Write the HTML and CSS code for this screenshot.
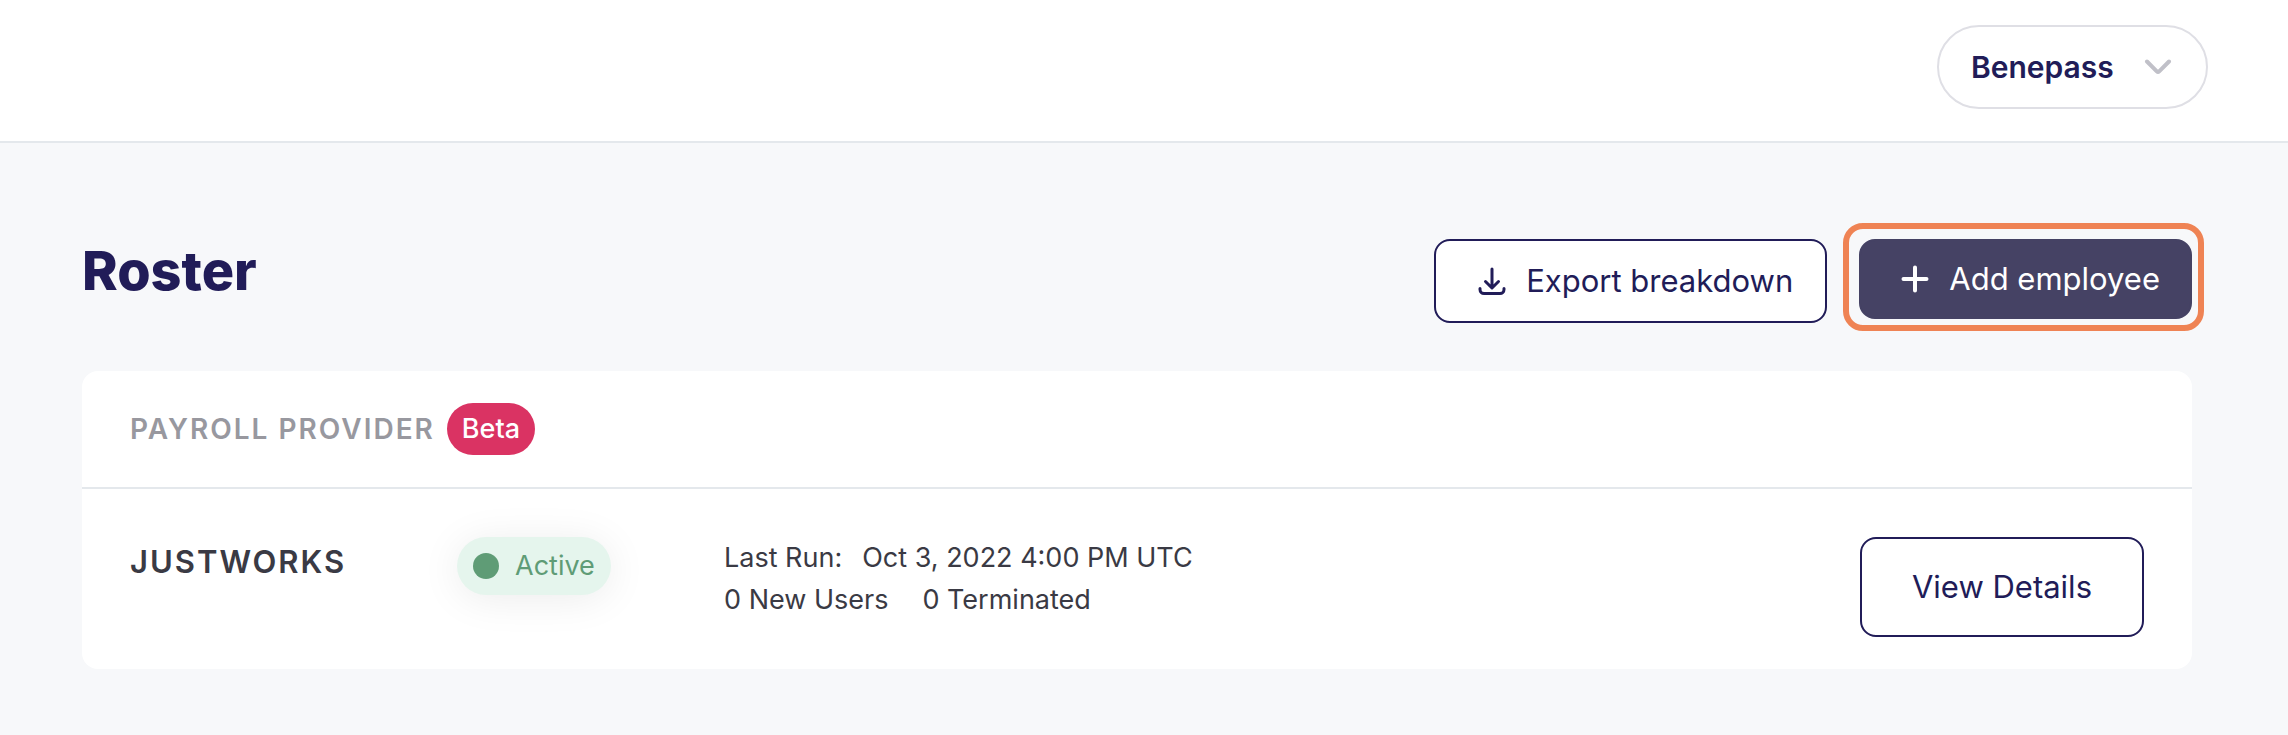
FILE: index.html
```html
<!DOCTYPE html>
<html lang="en">
<head>
<meta charset="utf-8">
<meta name="viewport" content="width=device-width, initial-scale=1">
<title>Roster</title>
<link rel="stylesheet" href="styles.css">
</head>
<body>
<header class="topbar">
  <div class="account">
    <select class="account-select" aria-label="Company">
      <option>Benepass</option>
    </select>
    <svg class="account-chevron" width="28" height="16" viewBox="0 0 28 16" fill="none" stroke="currentColor" stroke-width="4" stroke-linecap="round" stroke-linejoin="round" aria-hidden="true"><path d="M3 2.500 12.800 12.300Q14 13.500 15.200 12.300L25 2.500"/></svg>
  </div>
</header>
<main class="page">
  <div class="page-head">
    <h1 class="title">Roster</h1>
    <div class="actions">
      <button class="btn btn-export" type="button">
        <svg width="28" height="28" viewBox="0 0 28 28" fill="none" stroke="currentColor" stroke-width="3" stroke-linecap="round" stroke-linejoin="round" aria-hidden="true"><path d="M14 2v18M7.500 14.500 14 21l6.500-6.500M2 21.500v1a4 4 0 0 0 4 4h16a4 4 0 0 0 4-4v-1"/></svg>
        Export breakdown
      </button>
      <div class="highlight">
        <button class="btn btn-add" type="button">
          <svg width="28" height="28" viewBox="0 0 28 28" fill="none" stroke="currentColor" stroke-width="4" stroke-linecap="round" aria-hidden="true"><path d="M14 2.500v23M2.500 14h23"/></svg>
          Add employee
        </button>
      </div>
    </div>
  </div>
  <section class="card">
    <div class="card-head">
      <h2 class="card-title">PAYROLL PROVIDER</h2>
      <span class="beta">Beta</span>
    </div>
    <div class="provider">
      <h3 class="provider-name">JUSTWORKS</h3>
      <div class="provider-status"><span class="status"><span class="dot"></span>Active</span></div>
      <div class="run">
        <p class="run-line run-date"><span>Last Run:</span><span>Oct 3, 2022 4:00 PM UTC</span></p>
        <p class="run-line run-counts"><span>0 New Users</span><span>0 Terminated</span></p>
      </div>
      <button class="btn btn-details" type="button">View Details</button>
    </div>
  </section>
</main>
</body>
</html>
```

FILE: styles.css
```css
* {
  box-sizing: border-box;
}

body {
  margin: 0;
  background: #f7f8fa;
  color: #3a3a44;
  font-family: Inter, "Liberation Sans", sans-serif;
  font-size: 27px;
  line-height: 42px;
}

h1, h2, h3, p {
  margin: 0;
}

.topbar {
  display: flex;
  justify-content: flex-end;
  padding: 25px 80px 32px;
  background: #fff;
  border-bottom: 2px solid #e4e8ec;
}

.account {
  display: grid;
  align-items: center;
}

.account-select,
.account-chevron {
  grid-area: 1 / 1;
}

.account-select {
  appearance: none;
  height: 84px;
  padding: 0 92px 0 32px;
  border: 2px solid #dfdfe5;
  border-radius: 42px;
  background: #fff;
  color: #211c58;
  font: inherit;
  font-size: 30px;
  font-weight: 600;
}

.account-chevron {
  justify-self: end;
  margin-right: 36px;
  color: #c0c0c8;
  pointer-events: none;
}

.page {
  padding: 96px 96px 64px 82px;
}

.page-head {
  display: flex;
  justify-content: space-between;
  align-items: flex-start;
  margin-bottom: 48px;
}

.title {
  color: #211c58;
  font-size: 54px;
  font-weight: 800;
  line-height: 64px;
}

.actions {
  display: flex;
  align-items: flex-start;
  gap: 32px;
}

.btn {
  display: flex;
  align-items: center;
  justify-content: center;
  gap: 20px;
  border: 2px solid #211c58;
  border-radius: 16px;
  background: #fff;
  color: #211c58;
  font: inherit;
  font-size: 31px;
  white-space: nowrap;
}

.btn-export {
  height: 84px;
  padding: 0 32px 0 42px;
}

.btn-add {
  height: 80px;
  padding: 0 30px 0 40px;
  border-color: #454264;
  background: #454264;
  color: #fff;
}

.highlight {
  position: relative;
}

.highlight::after {
  content: "";
  position: absolute;
  inset: -16px -12px -12px -16px;
  border: 6px solid #ef8354;
  border-radius: 20px;
  pointer-events: none;
}

.card {
  border-radius: 16px;
  background: #fff;
}

.card-head {
  display: flex;
  align-items: center;
  gap: 12px;
  padding: 32px 48px;
  border-bottom: 2px solid #e4e8ec;
}

.card-title {
  color: #98989f;
  font-size: 28px;
  font-weight: 600;
  letter-spacing: 2px;
}

.beta {
  padding: 5px 15px;
  border-radius: 26px;
  background: #da3363;
  color: #fff;
  font-weight: 500;
}

.provider {
  display: grid;
  grid-template-columns: 327px 267px 1fr auto;
  align-items: start;
  padding: 48px 48px 32px;
}

.provider-name {
  padding-top: 4px;
  font-size: 31px;
  font-weight: 600;
  letter-spacing: 2px;
}

.status {
  display: inline-flex;
  align-items: center;
  gap: 16px;
  padding: 8px 16px;
  border-radius: 29px;
  background: #e5f5ed;
  box-shadow: 0 4px 40px rgba(0, 0, 0, 0.08);
  color: #5f9c76;
}

.dot {
  width: 26px;
  height: 26px;
  border-radius: 50%;
  background: #5f9c76;
}

.run-line {
  display: flex;
}

.run-date {
  gap: 20px;
}

.run-counts {
  gap: 34px;
}

.btn-details {
  height: 100px;
  padding: 0 50px;
}
```
